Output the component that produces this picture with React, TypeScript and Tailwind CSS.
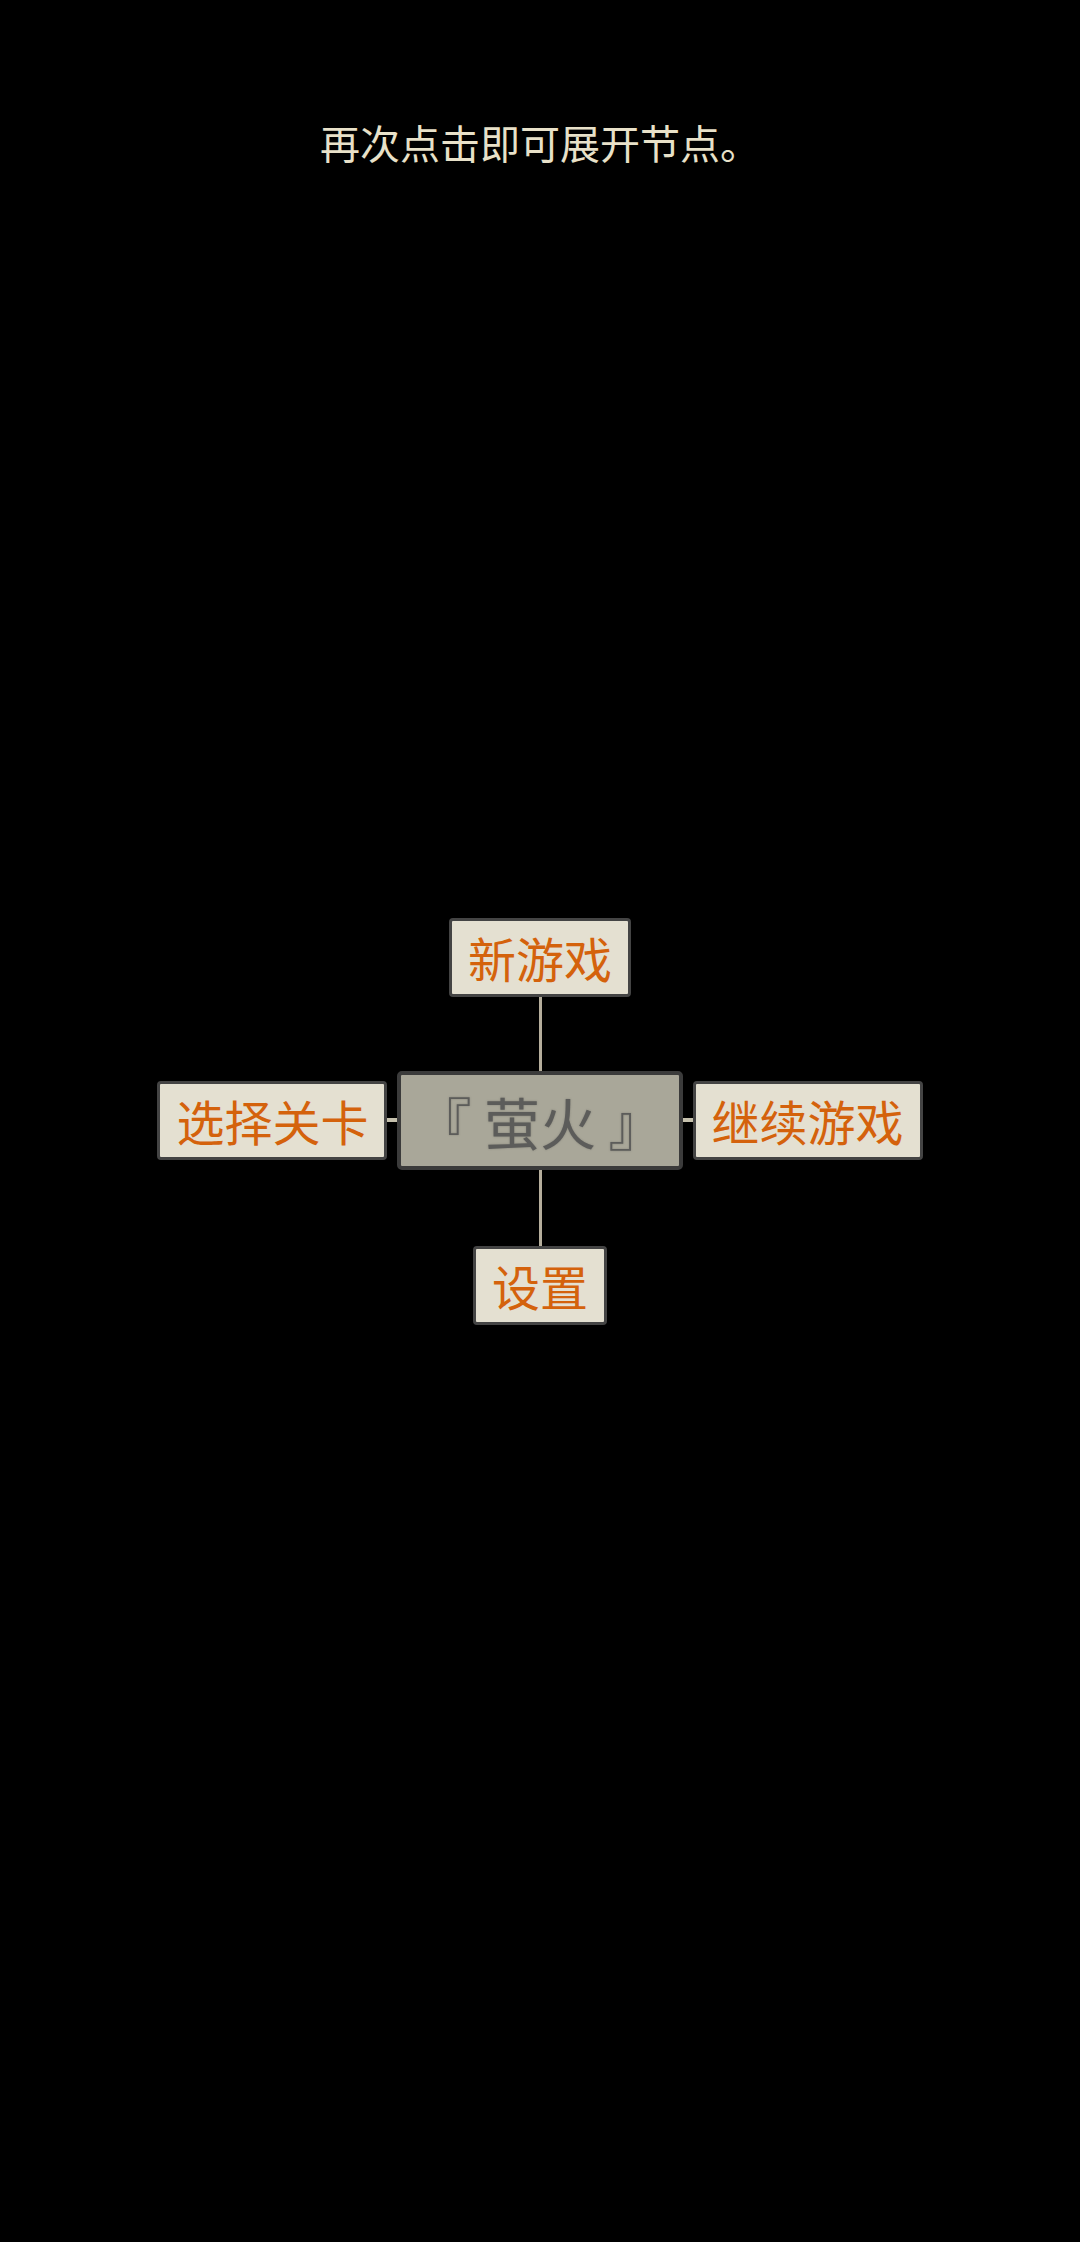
const cjk = "font-['Noto_Sans_CJK_SC','Noto_Sans_CJK_JP',sans-serif]";

function MenuNode({ label }: { label: string }) {
  return (
    <button
      className={`${cjk} rounded-[4px] border-[3px] border-[#444444] bg-[#e4e0d1] px-4 py-2 text-[48px] leading-[57px] text-[#d4620c]`}
    >
      {label}
    </button>
  );
}

function VLine({ h }: { h: string }) {
  return <div className={`${h} w-[3px] bg-[#b5ae9c]`} />;
}

function HLine() {
  return <div className="h-[4px] w-[10px] bg-[#c6c1ad]" />;
}

export default function App() {
  return (
    <div className="grid min-h-screen grid-rows-[282px_1fr_282px] bg-black">
      <header className="flex justify-center pt-[112px]">
        <p className={`${cjk} text-[40px] leading-[60px] text-[#e8e1c9]`}>
          再次点击即可展开节点。
        </p>
      </header>

      {/* node tree: root in the middle, branches on four sides */}
      <main className="flex flex-col items-center justify-center">
        <MenuNode label="新游戏" />
        <VLine h="h-[74px]" />
        <div className="flex items-center">
          <MenuNode label="选择关卡" />
          <HLine />
          <div
            className={`${cjk} whitespace-pre rounded-[5px] border-4 border-[#3b3b3b] bg-[#a9a799] px-[14px] py-3 text-[56px] leading-[67px] text-[#5c5c5a] [text-shadow:0_0_2px_rgba(60,60,58,0.35)]`}
          >
            『 萤火 』
          </div>
          <HLine />
          <MenuNode label="继续游戏" />
        </div>
        <VLine h="h-[76px]" />
        <MenuNode label="设置" />
      </main>

      <div />
    </div>
  );
}
